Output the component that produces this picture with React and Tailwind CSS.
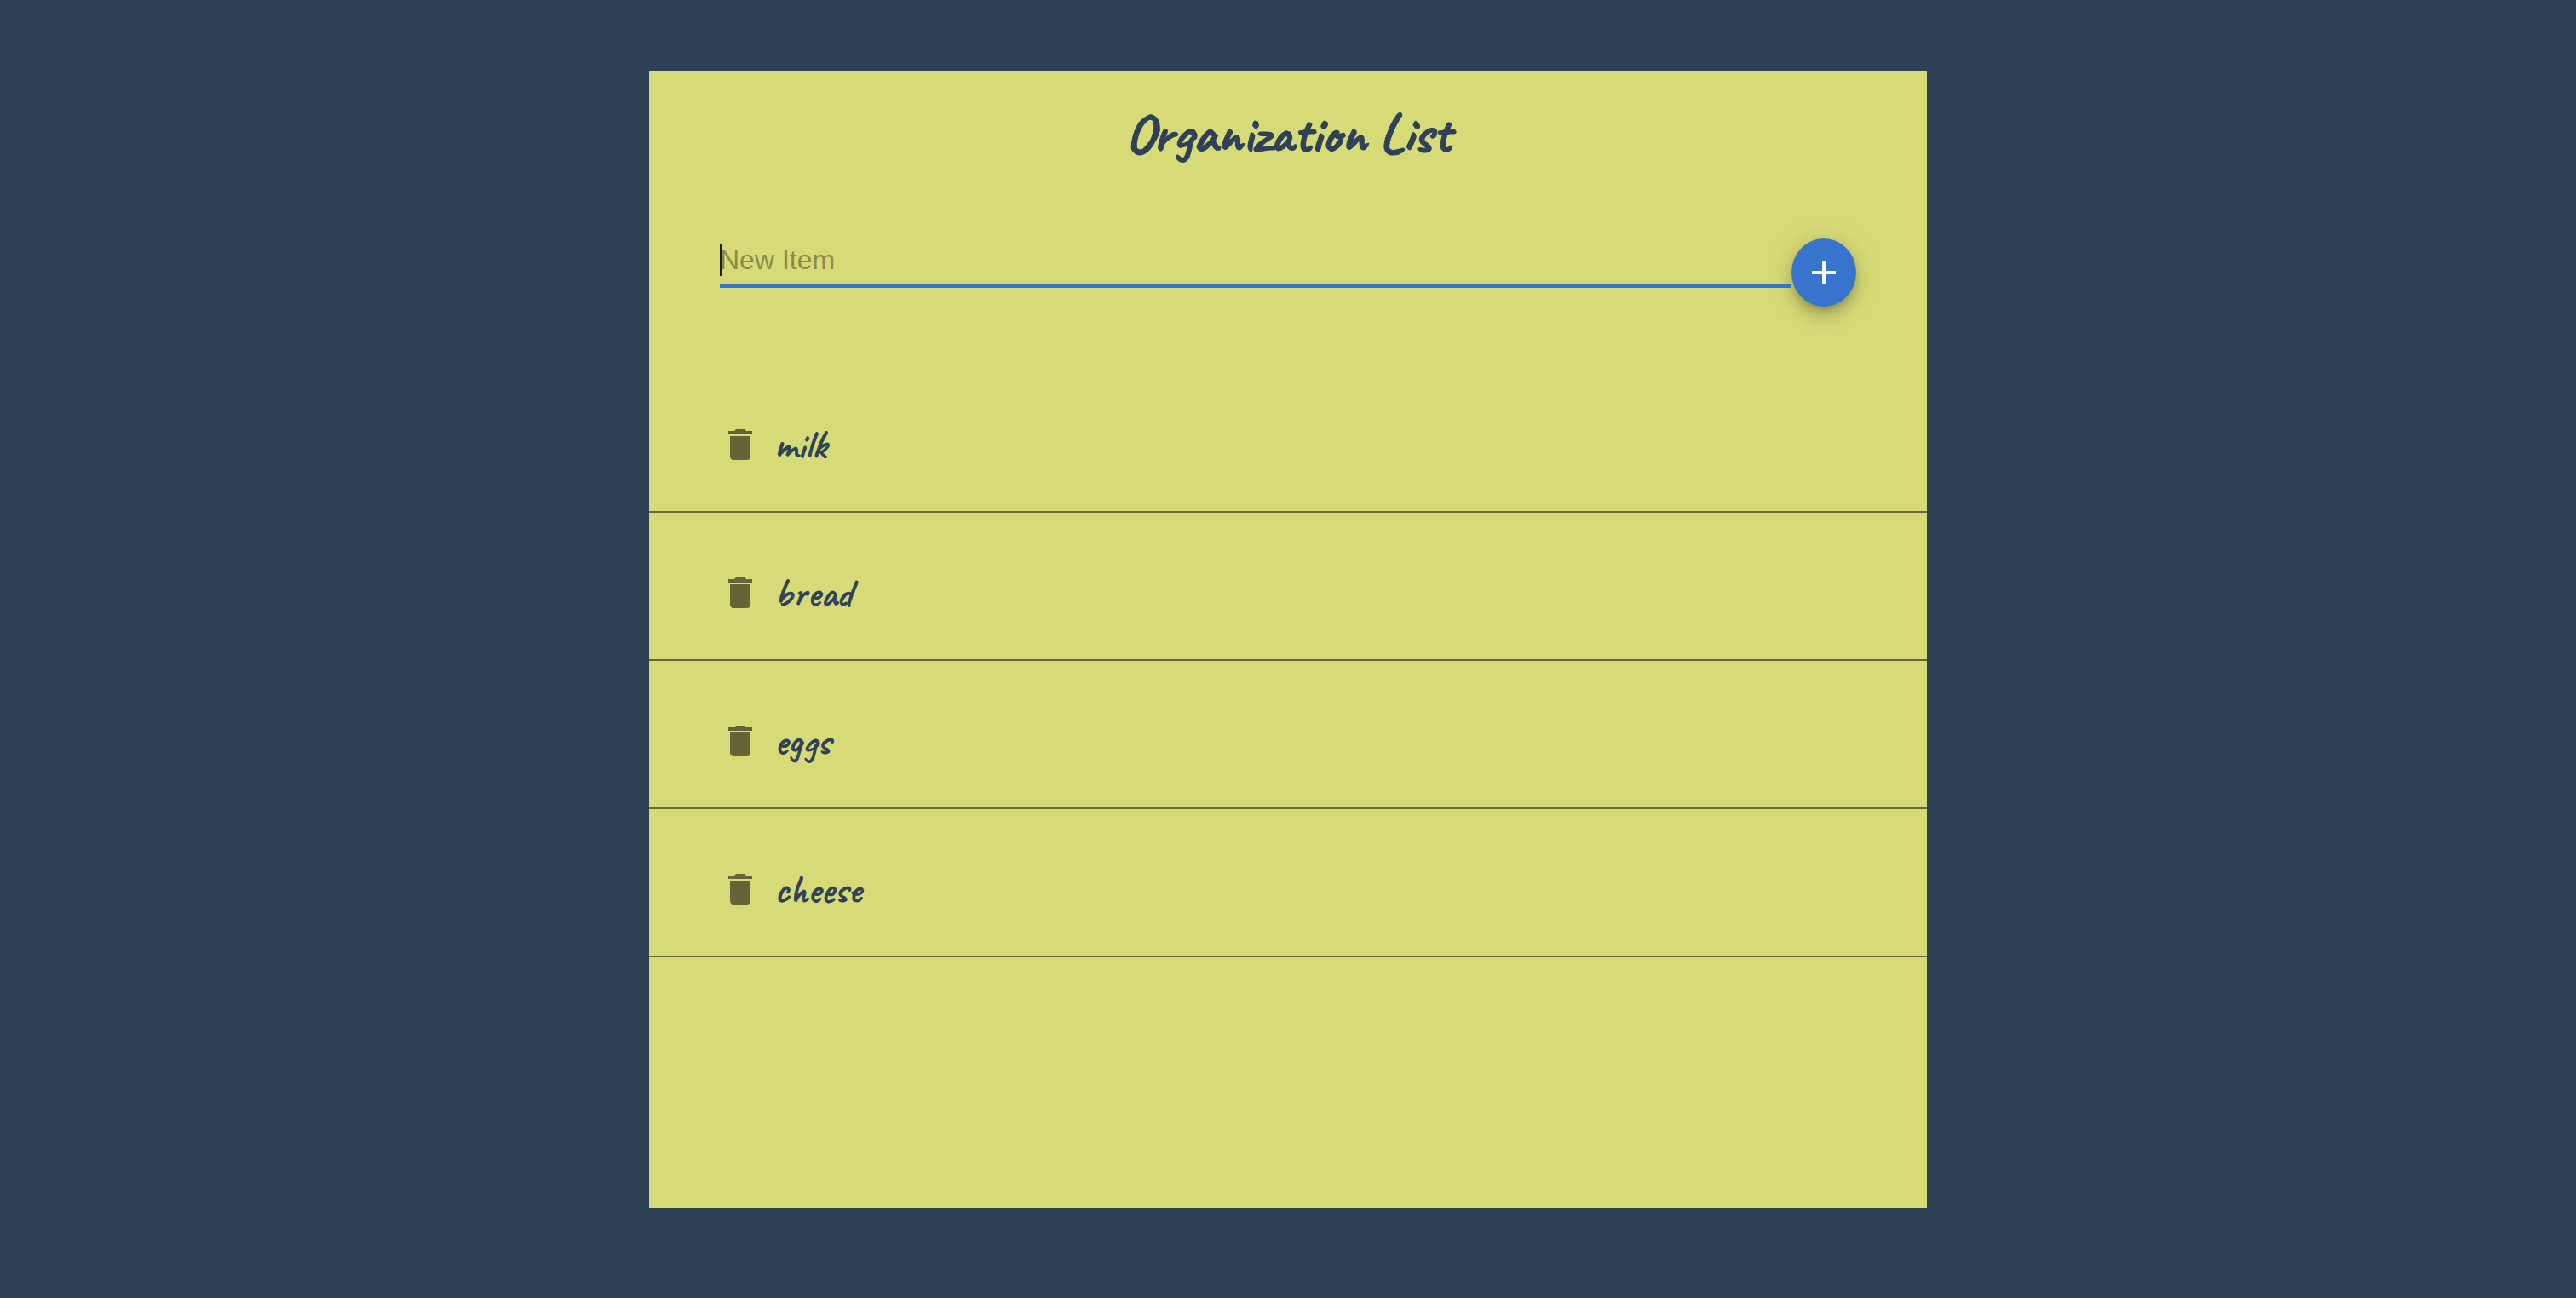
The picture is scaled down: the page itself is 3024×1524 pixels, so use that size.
import { useState } from "react";

const handwriting = "font-['Caveat',cursive] text-[#2f4159] [-webkit-text-stroke:1px_#2f4159]";

function PlusIcon() {
  return (
    <svg viewBox="0 0 24 24" className="size-12 shrink-0" fill="currentColor" aria-hidden="true">
      <path d="M19 13h-6v6h-2v-6H5v-2h6V5h2v6h6v2z" />
    </svg>
  );
}

function TrashIcon() {
  return (
    <svg viewBox="0 0 24 24" className="size-12" fill="currentColor" aria-hidden="true">
      <path d="M6 19c0 1.1.9 2 2 2h8c1.1 0 2-.9 2-2V7H6v12zM19 4h-3.500l-1-1h-5l-1 1H5v2h14V4z" />
    </svg>
  );
}

export default function App() {
  const [items, setItems] = useState(["milk", "bread", "eggs", "cheese"]);
  const [draft, setDraft] = useState("");

  const addItem = (event) => {
    event.preventDefault();
    const name = draft.trim();
    if (name) {
      setItems([...items, name]);
      setDraft("");
    }
  };

  return (
    <div className="min-h-screen bg-[#2f4157] pt-[83px] pb-[106px]">
      <main className="mx-auto w-full max-w-[1500px] bg-[#d7db77] pt-[34px] pb-[294px]">
        <h1 className={`${handwriting} text-center text-[64px] leading-[80px] font-bold`}>
          Organization List
        </h1>

        <form onSubmit={addItem} className="mx-[83px] mt-[77px] flex items-start">
          <div className="relative flex-1 border-b-4 border-[#3974cc] pt-3 pb-[10px]">
            <input
              type="text"
              aria-label="New Item"
              placeholder="New Item"
              value={draft}
              onChange={(event) => setDraft(event.target.value)}
              className="peer block h-[38px] w-full bg-transparent font-['Liberation_Sans',sans-serif] text-[32px] leading-[38px] text-black/90 outline-none placeholder:text-[#8a8c4c] placeholder:opacity-100"
            />
            <span className="absolute top-[13px] left-0 hidden h-[37px] w-[2px] bg-[#1d1d10] peer-placeholder-shown:block" />
          </div>
          <button
            type="submit"
            aria-label="Add item"
            className="mt-[6px] flex h-20 w-[76px] shrink-0 items-center justify-center rounded-[50%] bg-[#3974cc] text-white shadow-[0_6px_10px_-2px_rgba(0,0,0,0.2),0_12px_20px_0_rgba(0,0,0,0.14),0_2px_36px_0_rgba(0,0,0,0.12)]"
          >
            <PlusIcon />
          </button>
        </form>

        <ul className="mt-[68px]">
          {items.map((item, index) => (
            <li
              key={index}
              className="flex items-center gap-4 border-b-2 border-[#67683a] px-[83px] pt-[70px] pb-[54px]"
            >
              <button
                type="button"
                aria-label={`Delete ${item}`}
                onClick={() => setItems(items.filter((_, i) => i !== index))}
                className="text-[#646438]"
              >
                <TrashIcon />
              </button>
              <span className={`${handwriting} text-[48px] leading-[48px]`}>{item}</span>
            </li>
          ))}
        </ul>
      </main>
    </div>
  );
}
